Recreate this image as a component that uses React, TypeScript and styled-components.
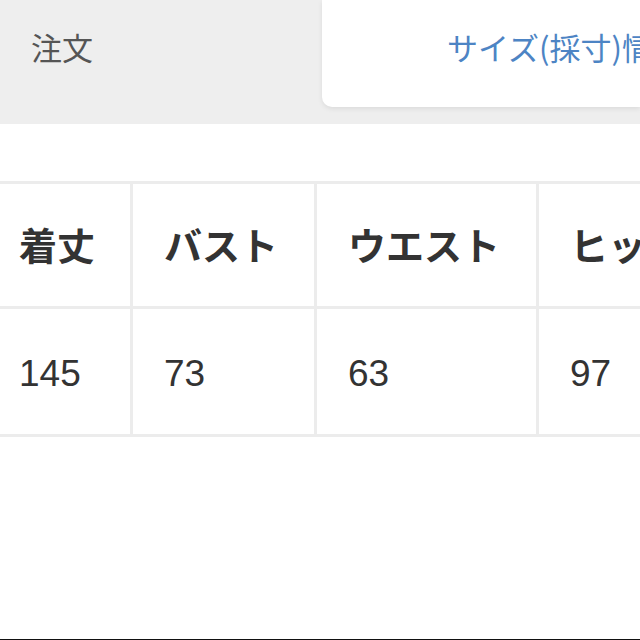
import React from "react";
import styled, { createGlobalStyle } from "styled-components";

const Global = createGlobalStyle`
  html, body { margin: 0; padding: 0; background: #ffffff; }
  body { font-family: "Noto Sans CJK JP", "Liberation Sans", sans-serif; }
`;

const Page = styled.div`
  width: 640px;
  height: 640px;
  overflow: hidden;
  background: #ffffff;
  box-sizing: border-box;
  border-bottom: 1px solid #111;
`;

const TabBar = styled.div`
  height: 124px;
  background: #eeeeee;
  display: flex;
  align-items: flex-start;
`;

const Tab = styled.div<{ $active?: boolean }>`
  box-sizing: border-box;
  height: 107px;
  display: flex;
  align-items: center;
  white-space: nowrap;
  overflow: hidden;
  font-family: "Noto Sans CJK JP", sans-serif;
  font-size: 31px;
  padding-bottom: 14px;
  ${(p) =>
    p.$active
      ? `
    flex: 1;
    padding-left: 125px;
    background: #ffffff;
    color: #4d84c4;
    border-bottom-left-radius: 10px;
    box-shadow: 0 2px 5px rgba(0,0,0,0.08);
  `
      : `
    width: 322px;
    padding-left: 31px;
    color: #555555;
  `}
`;

const TableWrap = styled.div`
  margin-top: 57px;
  overflow: hidden;
`;

const Table = styled.table`
  margin-left: -15px;
  border-collapse: collapse;
  table-layout: fixed;
`;

const Cell = styled.td<{ $head?: boolean; $w: number }>`
  width: ${(p) => p.$w}px;
  min-width: ${(p) => p.$w}px;
  box-sizing: border-box;
  border: 3px solid #ececec;
  padding: 0 0 0 31px;
  white-space: nowrap;
  vertical-align: middle;
  color: #333333;
  ${(p) =>
    p.$head
      ? `
    height: 125px;
    font-family: "Noto Sans CJK JP", sans-serif;
    font-weight: 700;
    font-size: 38px;
    padding-bottom: 4px;
  `
      : `
    height: 128px;
    font-family: "Liberation Sans", Arial, sans-serif;
    font-size: 37px;
    padding-top: 4px;
  `}
`;

const cols = [
  { head: "着丈", val: "145", w: 145 },
  { head: "バスト", val: "73", w: 184 },
  { head: "ウエスト", val: "63", w: 222 },
  { head: "ヒップ", val: "97", w: 200 },
];

export default function App() {
  return (
    <>
      <Global />
      <Page>
        <TabBar>
          <Tab>注文</Tab>
          <Tab $active>サイズ(採寸)情報</Tab>
        </TabBar>
        <TableWrap>
          <Table>
            <tbody>
              <tr>
                {cols.map((c) => (
                  <Cell key={c.head} $head $w={c.w}>
                    {c.head}
                  </Cell>
                ))}
              </tr>
              <tr>
                {cols.map((c) => (
                  <Cell key={c.head} $w={c.w}>
                    {c.val}
                  </Cell>
                ))}
              </tr>
            </tbody>
          </Table>
        </TableWrap>
      </Page>
    </>
  );
}
